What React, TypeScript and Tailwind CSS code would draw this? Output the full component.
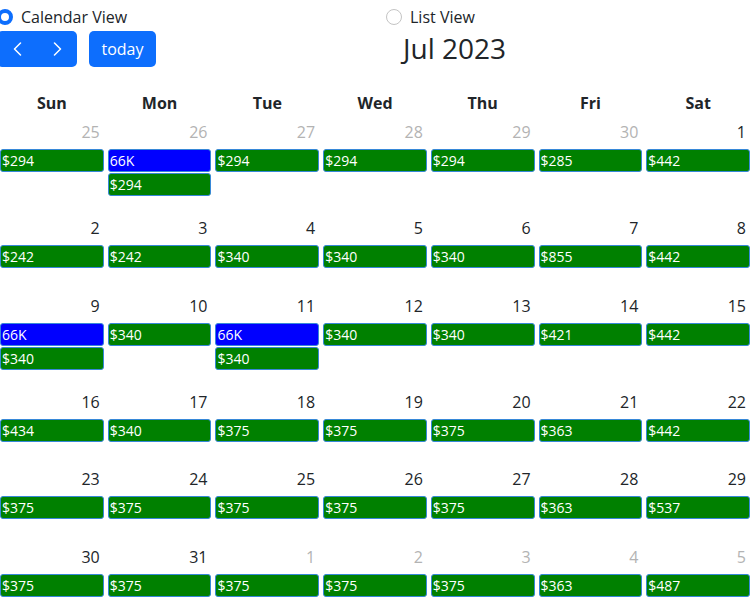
import React from "react";

type Ev = { t: string; blue?: boolean };
type Day = { n: number; other?: boolean; ev: Ev[] };

const g = (t: string): Ev => ({ t });
const b = (t: string): Ev => ({ t, blue: true });

const weeks: { h: string; days: Day[] }[] = [
  {
    h: "h-[96px]",
    days: [
      { n: 25, other: true, ev: [g("$294")] },
      { n: 26, other: true, ev: [b("66K"), g("$294")] },
      { n: 27, other: true, ev: [g("$294")] },
      { n: 28, other: true, ev: [g("$294")] },
      { n: 29, other: true, ev: [g("$294")] },
      { n: 30, other: true, ev: [g("$285")] },
      { n: 1, ev: [g("$442")] },
    ],
  },
  {
    h: "h-[78px]",
    days: [
      { n: 2, ev: [g("$242")] },
      { n: 3, ev: [g("$242")] },
      { n: 4, ev: [g("$340")] },
      { n: 5, ev: [g("$340")] },
      { n: 6, ev: [g("$340")] },
      { n: 7, ev: [g("$855")] },
      { n: 8, ev: [g("$442")] },
    ],
  },
  {
    h: "h-[96px]",
    days: [
      { n: 9, ev: [b("66K"), g("$340")] },
      { n: 10, ev: [g("$340")] },
      { n: 11, ev: [b("66K"), g("$340")] },
      { n: 12, ev: [g("$340")] },
      { n: 13, ev: [g("$340")] },
      { n: 14, ev: [g("$421")] },
      { n: 15, ev: [g("$442")] },
    ],
  },
  {
    h: "h-[77px]",
    days: [
      { n: 16, ev: [g("$434")] },
      { n: 17, ev: [g("$340")] },
      { n: 18, ev: [g("$375")] },
      { n: 19, ev: [g("$375")] },
      { n: 20, ev: [g("$375")] },
      { n: 21, ev: [g("$363")] },
      { n: 22, ev: [g("$442")] },
    ],
  },
  {
    h: "h-[78px]",
    days: [
      { n: 23, ev: [g("$375")] },
      { n: 24, ev: [g("$375")] },
      { n: 25, ev: [g("$375")] },
      { n: 26, ev: [g("$375")] },
      { n: 27, ev: [g("$375")] },
      { n: 28, ev: [g("$363")] },
      { n: 29, ev: [g("$537")] },
    ],
  },
  {
    h: "h-[78px]",
    days: [
      { n: 30, ev: [g("$375")] },
      { n: 31, ev: [g("$375")] },
      { n: 1, other: true, ev: [g("$375")] },
      { n: 2, other: true, ev: [g("$375")] },
      { n: 3, other: true, ev: [g("$375")] },
      { n: 4, other: true, ev: [g("$363")] },
      { n: 5, other: true, ev: [g("$487")] },
    ],
  },
];

const heads = ["Sun", "Mon", "Tue", "Wed", "Thu", "Fri", "Sat"];

function Chevron({ dir }: { dir: "l" | "r" }) {
  return (
    <svg width="9" height="14" viewBox="0 0 9 14" fill="none">
      <path
        d={dir === "l" ? "M7.5 1 L1.5 7 L7.5 13" : "M1.5 1 L7.5 7 L1.5 13"}
        stroke="white"
        strokeWidth="1.5"
        strokeLinecap="round"
        strokeLinejoin="round"
      />
    </svg>
  );
}

export default function App() {
  return (
    <div
      className="w-[750px] h-[600px] overflow-hidden bg-white text-[#212529]"
      style={{ fontFamily: '"Open Sans", "Noto Sans", sans-serif' }}
    >
      <div className="-ml-[3px] w-[756px]">
        <div className="flex items-center h-[28px] mt-[3px] text-[16px]">
          <label className="flex items-center w-[389px]">
            <span className="w-[16px] h-[16px] rounded-full border-[4px] border-[#0d6efd] bg-white box-border" />
            <span className="ml-[8px]">Calendar View</span>
          </label>
          <label className="flex items-center">
            <span className="w-[16px] h-[16px] rounded-full border border-[#c4c4c4] bg-white box-border" />
            <span className="ml-[8px]">List View</span>
          </label>
        </div>
        <div className="flex items-center justify-between h-[36px]">
          <div className="flex items-center">
            <div className="flex">
              <button className="w-[40px] h-[36px] bg-[#0d6efd] rounded-l-[5px] flex items-center justify-center">
                <Chevron dir="l" />
              </button>
              <button className="w-[40px] h-[36px] bg-[#0d6efd] rounded-r-[5px] flex items-center justify-center">
                <Chevron dir="r" />
              </button>
            </div>
            <button className="ml-[12px] w-[67px] h-[36px] bg-[#0d6efd] rounded-[5px] text-white text-[16px] flex items-center justify-center">
              today
            </button>
          </div>
          <h2 className="text-[28px] leading-none font-normal -mt-[2px]">Jul 2023</h2>
          <div />
        </div>
      </div>
      <div className="-ml-[2px] w-[754px] mt-[23px]">
        <div className="grid grid-cols-7 h-[26px] items-center">
          {heads.map((h) => (
            <div key={h} className="text-center font-bold text-[16px]">
              {h}
            </div>
          ))}
        </div>
        {weeks.map((w, wi) => (
          <div key={wi} className={`grid grid-cols-7 ${w.h}`}>
            {w.days.map((d, di) => (
              <div key={di} className="pt-[4px]">
                <div
                  className={`h-[24px] leading-[24px] text-right pr-[6px] text-[16px] ${
                    d.other ? "text-[#b3b3b3]" : "text-[#212529]"
                  }`}
                >
                  {d.n}
                </div>
                <div className="mt-[5px] flex flex-col gap-[1px] px-[2px]">
                  {d.ev.map((e, ei) => (
                    <div
                      key={ei}
                      className={`h-[23px] rounded-[3px] border border-[#3788d8] text-white text-[14px] font-medium leading-[21px] pl-[1px] ${
                        e.blue ? "bg-[#0000ff]" : "bg-[#008000]"
                      }`}
                    >
                      {e.t}
                    </div>
                  ))}
                </div>
              </div>
            ))}
          </div>
        ))}
      </div>
    </div>
  );
}
